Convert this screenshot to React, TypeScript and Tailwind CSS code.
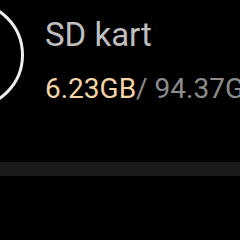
export default function App() {
  return (
    <div className="w-[240px] h-[240px] bg-black overflow-hidden flex flex-col" style={{ fontFamily: 'Roboto, "Noto Sans", sans-serif' }}>
      <div className="flex items-start h-[162px]">
        <div className="shrink-0 w-[108px] h-[108px] mt-[1px] ml-[-84px] rounded-full border-[3px] border-[#ededed]" />
        <div className="flex flex-col ml-[21px] pt-[15px] whitespace-nowrap">
          <div className="text-[33px] leading-[40px] text-[#bfbfbf]">SD kart</div>
          <div className="text-[28px] leading-[40px] mt-[14px] text-[#8c8c8c]">
            <span className="text-[#f4d3a6]">6.23GB</span>/ 94.37GB
          </div>
        </div>
      </div>
      <div className="h-[14px] w-full bg-[#1a1a1a]" />
    </div>
  );
}
